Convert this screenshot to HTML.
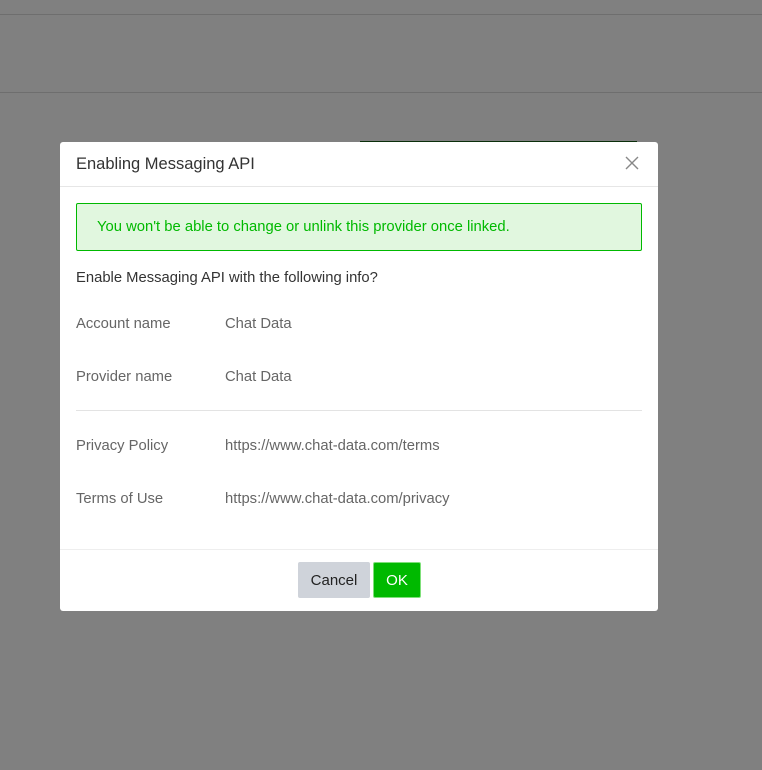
<!DOCTYPE html>
<html><head><style>
body{margin:0;width:762px;height:770px;background:#808080;position:relative;overflow:hidden;font-family:"Liberation Sans",sans-serif;}
.l{position:absolute;left:0;right:0;height:1px;background:#6e6e6e}
.m{position:absolute;left:60px;top:142px;width:598px;height:469px;background:#fff;border-radius:3px;}
.hd{height:44px;border-bottom:1px solid #e6e6e6;position:relative}
.hd span{position:absolute;left:16px;top:13px;font-size:16.5px;color:#333}
.x{position:absolute;right:18px;top:13px;width:16px;height:16px}
.al{position:absolute;left:16px;top:61px;background:#e1f7df;border:1px solid #00b900;border-radius:2px;color:#00b900;font-size:14.8px;line-height:46px;padding-left:20px;box-sizing:border-box;width:566px;height:48px}
.q{position:absolute;left:16px;top:128px;font-size:14.8px;color:#333}
.r{position:absolute;left:16px;font-size:14.8px;color:#666}
.v{position:absolute;left:165px;font-size:14.8px;color:#666}
.hr{position:absolute;left:16px;width:566px;top:268px;height:1px;background:#e3e3e3}
.ft{position:absolute;left:0;right:0;top:407px;height:1px;background:#eee}
.b{position:absolute;top:420px;height:36px;line-height:38px;font-size:15px;text-align:center;border-radius:2px}
</style></head><body>
<div class="l" style="top:14px"></div>
<div class="l" style="top:92px"></div>
<div style="position:absolute;left:360px;top:141px;width:277px;height:2px;background:#0a2e0a"></div>
<div class="m">
<div class="hd"><span>Enabling Messaging API</span>
<svg class="x" viewBox="0 0 16 16"><path d="M2 2L14 14M14 2L2 14" stroke="#888" stroke-width="1.4"/></svg></div>
<div class="al">You won't be able to change or unlink this provider once linked.</div>
<div class="q">Enable Messaging API with the following info?</div>
<div class="r" style="top:174px">Account name</div><div class="v" style="top:174px">Chat Data</div>
<div class="r" style="top:227px">Provider name</div><div class="v" style="top:227px">Chat Data</div>
<div class="hr"></div>
<div class="r" style="top:296px">Privacy Policy</div><div class="v" style="top:296px">https://www.chat-data.com/terms</div>
<div class="r" style="top:349px">Terms of Use</div><div class="v" style="top:349px">https://www.chat-data.com/privacy</div>
<div class="ft"></div>
<div class="b" style="left:238px;width:72px;background:#cfd3da;color:#222">Cancel</div>
<div class="b" style="left:313px;width:48px;background:#00b900;color:#fff;border:1px solid #7fe07a;box-sizing:border-box;line-height:36px">OK</div>
</div>
</body></html>
